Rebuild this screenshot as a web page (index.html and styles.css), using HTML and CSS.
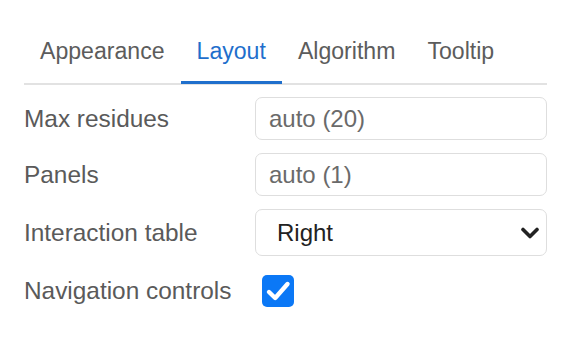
FILE: index.html
```html
<!DOCTYPE html>
<html lang="en">
<head>
  <meta charset="UTF-8">
  <meta name="viewport" content="width=device-width, initial-scale=1.0">
  <title>Layout settings</title>
  <link rel="stylesheet" href="styles.css">
</head>
<body>

<div class="panel">
  <div class="tabs">
    <div class="tab">Appearance</div>
    <div class="tab active">Layout</div>
    <div class="tab">Algorithm</div>
    <div class="tab">Tooltip</div>
  </div>

  <div class="form">
    <label class="label" for="maxResidues">Max residues</label>
    <input class="field" id="maxResidues" type="text" placeholder="auto (20)">

    <label class="label" for="panels">Panels</label>
    <input class="field" id="panels" type="text" placeholder="auto (1)">

    <label class="label" for="table">Interaction table</label>
    <div class="select-wrap">
      <select class="field select" id="table">
        <option>Right</option>
        <option>Bottom</option>
        <option>Hidden</option>
      </select>
      <svg class="chevron" width="18" height="12" viewBox="0 0 18 12">
        <path d="M2 2.5 L9 9.5 L16 2.5" fill="none" stroke="#222" stroke-width="3.6" stroke-linecap="round" stroke-linejoin="round"/>
      </svg>
    </div>

    <span class="label">Navigation controls</span>
    <div class="check-wrap">
      <span class="check">
        <svg width="32" height="32" viewBox="0 0 32 32">
          <path d="M7 17 L13.2 23 L25.5 9" fill="none" stroke="#fff" stroke-width="4.4" stroke-linecap="round" stroke-linejoin="round"/>
        </svg>
      </span>
    </div>
  </div>
</div>

</body>
</html>
```

FILE: styles.css
```css
body {
  margin: 0;
  background: #fff;
  font-family: 'Liberation Sans', Arial, sans-serif;
}

.panel {
  padding: 26px 23px 0 24px;
}

.tabs {
  display: flex;
  border-bottom: 2px solid #e2e2e2;
}

.tab {
  font-size: 23.1px;
  line-height: 26px;
  padding: 12px 16px 17px;
  color: #5c5c5c;
  border-bottom: 3px solid transparent;
  margin-bottom: -1px;
}

.tab.active {
  color: #1f6fcc;
  border-bottom-color: #1f6fcc;
}

.form {
  display: grid;
  grid-template-columns: 231px 1fr;
  row-gap: 13px;
  align-items: center;
  margin-top: 12px;
}

.label {
  font-size: 24.4px;
  color: #5a5a5a;
}

.field {
  box-sizing: border-box;
  width: 100%;
  height: 43px;
  padding: 0 13px;
  font-family: inherit;
  font-size: 24px;
  color: #222;
  background: #fff;
  border: 1.5px solid #dedede;
  border-radius: 7px;
  outline: none;
}

.field::placeholder {
  color: #6a6a6a;
}

.select-wrap {
  position: relative;
}

.select {
  height: 47px;
  padding-left: 21px;
  -webkit-appearance: none;
  appearance: none;
}

.chevron {
  position: absolute;
  right: 8px;
  top: 18px;
  pointer-events: none;
}

.check-wrap {
  display: flex;
  padding: 6px 0 6px 7px;
}

.check {
  display: block;
  width: 32px;
  height: 32px;
  border-radius: 5px;
  background: #0b78f6;
}

.check svg {
  display: block;
}
```
